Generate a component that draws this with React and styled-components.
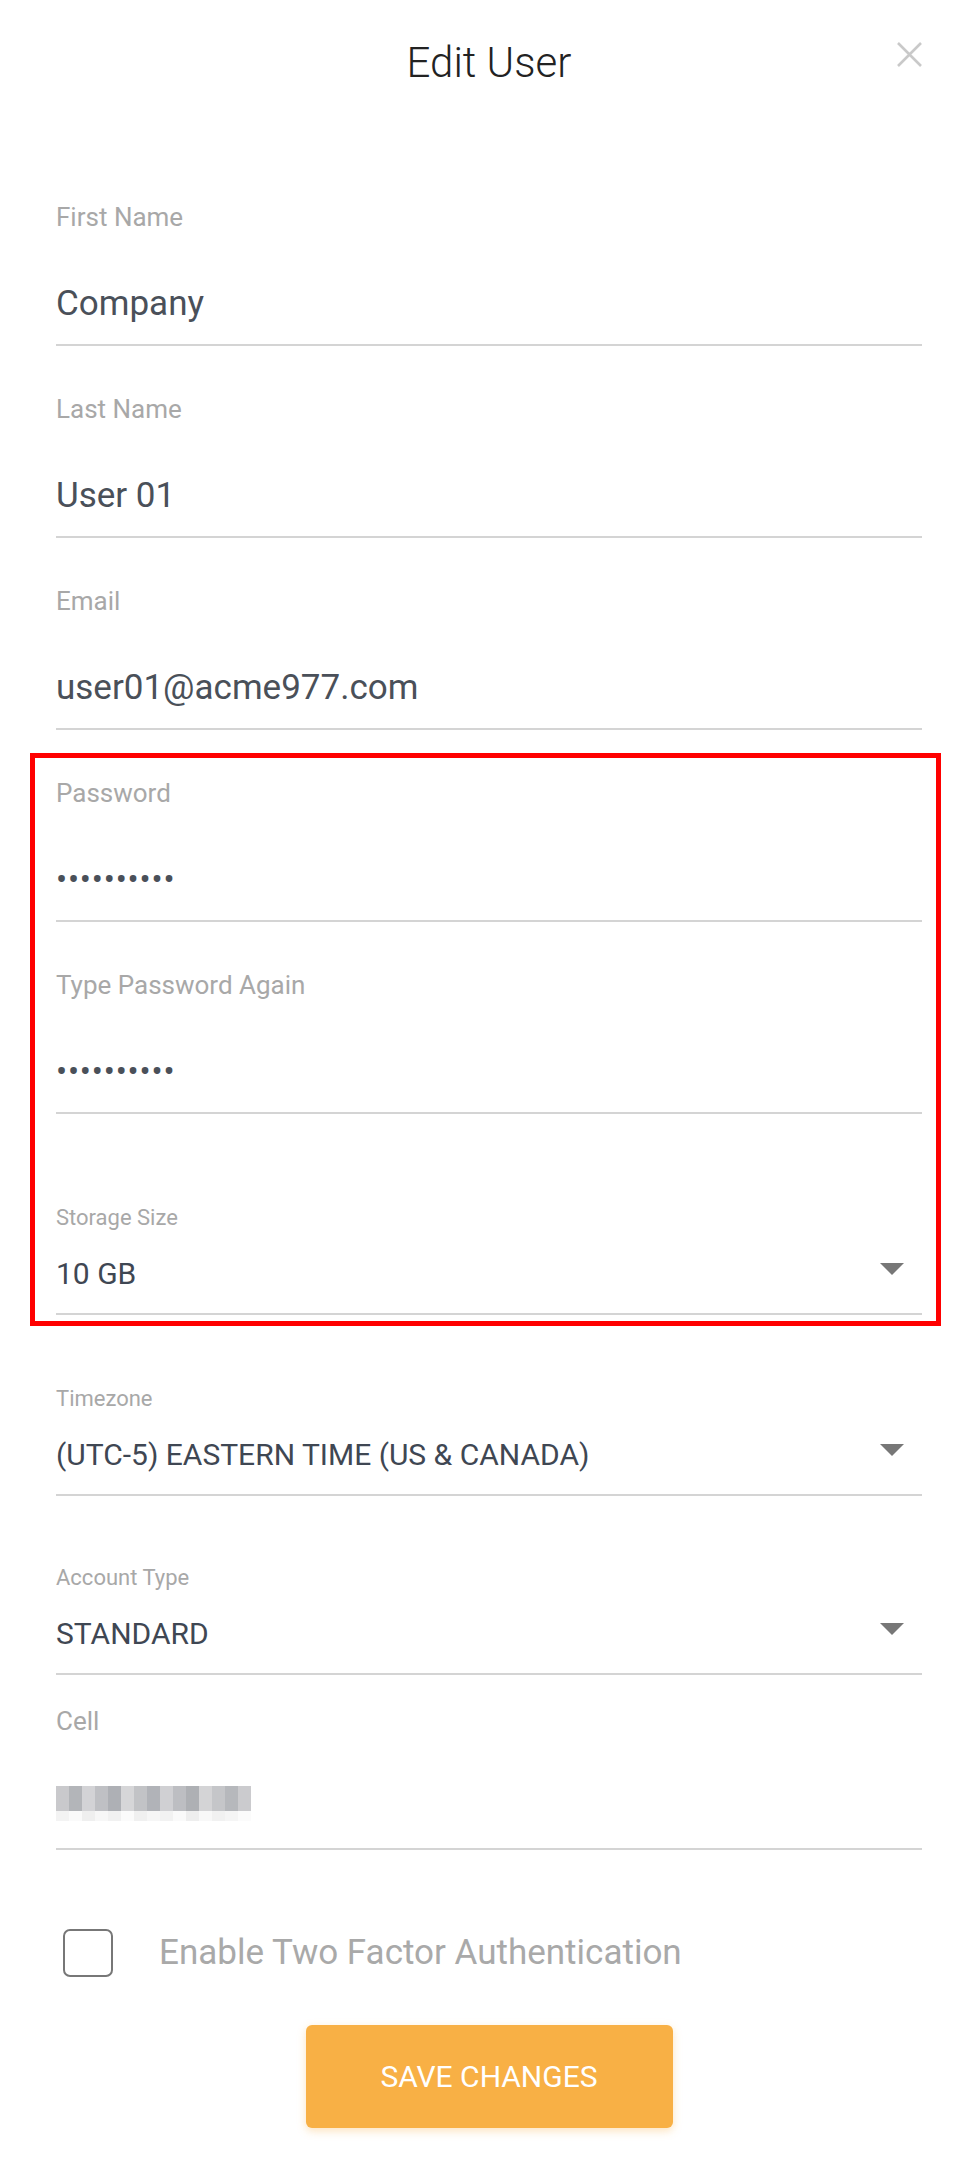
import React from 'react';
import styled, { createGlobalStyle } from 'styled-components';

const GlobalStyle = createGlobalStyle`
  body {
    margin: 0;
    background: #fff;
    font-family: Roboto, "Liberation Sans", sans-serif;
  }
`;

const Modal = styled.div`
  width: 973px;
  box-sizing: border-box;
  padding: 38px 51px 40px 56px;
  display: flex;
  flex-direction: column;
`;

const Header = styled.header`
  display: grid;
  grid-template-columns: 1fr auto 1fr;
  align-items: start;
`;

const Title = styled.h1`
  grid-column: 2;
  margin: 0;
  font-size: 42px;
  font-weight: 300;
  line-height: 50px;
  color: #222;
`;

const CloseButton = styled.button`
  grid-column: 3;
  justify-self: end;
  margin-top: 4px;
  width: 25px;
  height: 25px;
  padding: 0;
  border: 0;
  background: none;
  display: flex;
`;

const Field = styled.div`
  margin-top: ${(p) => p.$gap}px;
  padding-bottom: ${(p) => (p.$select ? 21 : 18)}px;
  border-bottom: 2px solid #d4d4d4;
`;

const Label = styled.div`
  font-size: ${(p) => (p.$small ? 22 : 26)}px;
  line-height: ${(p) => (p.$small ? 26 : 30)}px;
  color: #a8a8a8;
`;

const Value = styled.div`
  margin-top: 50px;
  height: 44px;
  font-size: 35px;
  line-height: 44px;
  color: #4a5059;
`;

const Dots = styled(Value)`
  font-size: 33px;
  letter-spacing: 0.8px;
`;

const SelectRow = styled.div`
  margin-top: 25px;
  display: flex;
  justify-content: space-between;
  align-items: flex-start;
`;

const SelectValue = styled.span`
  font-size: 30px;
  line-height: 36px;
  color: #3f4753;
`;

const Caret = styled.span`
  margin: 7px 18px 0 0;
  width: 0;
  height: 0;
  border-left: 12px solid transparent;
  border-right: 12px solid transparent;
  border-top: 12px solid #777;
`;

const Highlight = styled.section`
  margin: 23px -19px 0 -26px;
  padding: 20px 14px 6px 21px;
  border: 5px solid #ff0000;
`;

const Mosaic = styled.svg`
  display: block;
  margin-top: 5px;
`;

const CheckRow = styled.label`
  margin-top: 79px;
  padding-left: 7px;
  display: flex;
  align-items: center;
`;

const CheckBox = styled.span`
  width: 50px;
  height: 48px;
  box-sizing: border-box;
  border: 2px solid #777;
  border-radius: 7px;
`;

const CheckText = styled.span`
  margin-left: 46px;
  font-size: 35px;
  line-height: 40px;
  color: #a9a9a9;
`;

const SaveButton = styled.button`
  align-self: center;
  margin-top: 48px;
  width: 367px;
  height: 103px;
  border: 0;
  border-radius: 6px;
  background: #f8b045;
  color: #fff;
  font-family: inherit;
  font-size: 30px;
  box-shadow: 0 3px 8px rgba(248, 176, 69, 0.35);
`;

const TextField = ({ gap, label, children }) => (
  <Field $gap={gap}>
    <Label>{label}</Label>
    {children}
  </Field>
);

const SelectField = ({ gap, label, value }) => (
  <Field $gap={gap} $select>
    <Label $small>{label}</Label>
    <SelectRow>
      <SelectValue>{value}</SelectValue>
      <Caret />
    </SelectRow>
  </Field>
);

const topRow = ['#c9c9cc', '#b3b5b9', '#d3d3d6', '#bfc0c4', '#aeb0b5', '#d6d6d8', '#c2c3c6', '#b1b3b8', '#d0d0d3', '#bdbec2', '#aeb0b4', '#d4d4d6', '#c5c6c9', '#b6b8bc', '#cbcbce'];
const bottomRow = ['#f3f3f3', '#fafafa', '#efefef', '#f7f7f7', '#f1f1f1', '#fbfbfb', '#f0f0f0', '#f6f6f6', '#f2f2f2', '#fafafa', '#eeeeee', '#f8f8f8', '#f1f1f1', '#f5f5f5', '#fbfbfb'];

const Redacted = () => (
  <Mosaic width="195" height="35" viewBox="0 0 195 35">
    {topRow.map((c, i) => (
      <rect key={'t' + i} x={i * 13} y="0" width="13" height="25" fill={c} />
    ))}
    {bottomRow.map((c, i) => (
      <rect key={'b' + i} x={i * 13} y="25" width="13" height="10" fill={c} />
    ))}
  </Mosaic>
);

export default function App() {
  return (
    <>
      <GlobalStyle />
      <Modal>
        <Header>
          <Title>Edit User</Title>
          <CloseButton aria-label="Close">
            <svg width="25" height="25" viewBox="0 0 25 25">
              <path d="M1 1L24 24M24 1L1 24" stroke="#c9c9c9" strokeWidth="2.6" />
            </svg>
          </CloseButton>
        </Header>

        <TextField gap={114} label="First Name">
          <Value>Company</Value>
        </TextField>
        <TextField gap={48} label="Last Name">
          <Value>User 01</Value>
        </TextField>
        <TextField gap={48} label="Email">
          <Value>user01@acme977.com</Value>
        </TextField>

        <Highlight>
          <TextField gap={0} label="Password">
            <Dots>••••••••••</Dots>
          </TextField>
          <TextField gap={48} label="Type Password Again">
            <Dots>••••••••••</Dots>
          </TextField>
          <SelectField gap={91} label="Storage Size" value="10 GB" />
        </Highlight>

        <SelectField gap={60} label="Timezone" value="(UTC-5) EASTERN TIME (US & CANADA)" />
        <SelectField gap={69} label="Account Type" value="STANDARD" />

        <TextField gap={31} label="Cell">
          <Value>
            <Redacted />
          </Value>
        </TextField>

        <CheckRow>
          <CheckBox />
          <CheckText>Enable Two Factor Authentication</CheckText>
        </CheckRow>

        <SaveButton>SAVE CHANGES</SaveButton>
      </Modal>
    </>
  );
}
